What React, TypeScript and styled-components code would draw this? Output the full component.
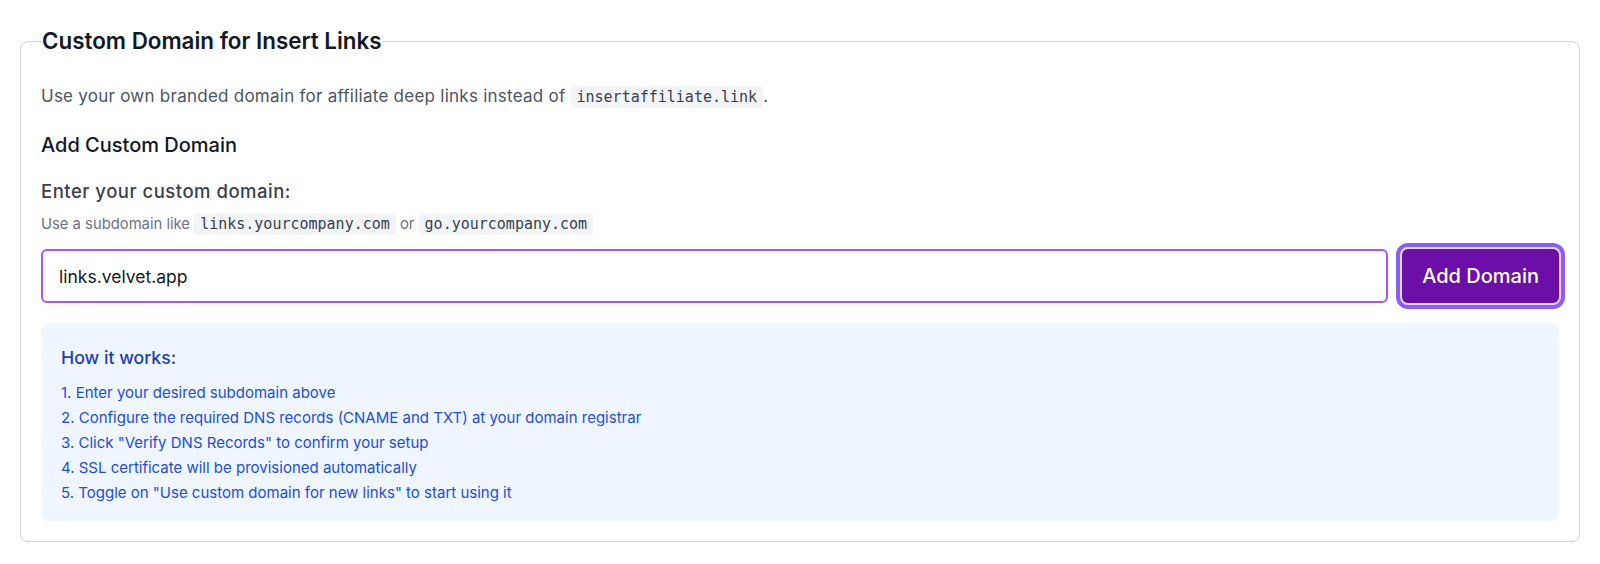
import React from 'react';
import styled, { createGlobalStyle } from 'styled-components';

const GlobalStyle = createGlobalStyle`
  html, body {
    margin: 0;
    padding: 0;
    background: #fff;
  }
  body {
    font-family: Inter, "Noto Sans", sans-serif;
    color: #111827;
    -webkit-font-smoothing: antialiased;
  }
`;

const Page = styled.div`
  padding: 27px 20px 20px;
`;

const Fieldset = styled.fieldset`
  margin: 0;
  min-width: 0;
  border: 1px solid #d1d5db;
  border-radius: 8px;
  padding: 0 20px 20px;
`;

const Legend = styled.legend`
  padding: 0 1px;
  font-size: 22.4px;
  line-height: 28px;
  font-weight: 600;
  color: #111827;
`;

const Intro = styled.p`
  margin: 29px 0 0;
  font-size: 17px;
  letter-spacing: 0.25px;
  line-height: 24px;
  color: #4b5563;
`;

const Code = styled.code`
  font-family: "DejaVu Sans Mono", monospace;
  font-size: 15px;
  letter-spacing: 0;
  line-height: 18px;
  background: #f3f4f6;
  color: #374151;
  border-radius: 4px;
  padding: 2px 6px;
`;

const SectionTitle = styled.h3`
  margin: 23px 0 0;
  font-size: 20px;
  line-height: 28px;
  font-weight: 500;
  color: #111827;
`;

const Label = styled.label`
  display: block;
  margin-top: 20px;
  font-size: 18.5px;
  letter-spacing: 0.5px;
  line-height: 24px;
  font-weight: 500;
  color: #374151;
`;

const Hint = styled.p`
  margin: 11px 0 0;
  font-size: 14.8px;
  line-height: 21px;
  color: #6b7280;
`;

const Row = styled.div`
  display: flex;
  gap: 14px;
  margin-top: 14px;
`;

const Input = styled.input`
  flex: 1;
  min-width: 0;
  height: 54px;
  box-sizing: border-box;
  border: 2px solid #a855f7;
  border-radius: 6px;
  padding: 0 16px;
  font-family: Inter, sans-serif;
  font-size: 17.5px;
  color: #111827;
  outline: none;
  background: #fff;
`;

const Button = styled.button`
  height: 54px;
  padding: 0 20px;
  border: none;
  border-radius: 6px;
  background: #6b0fa8;
  color: #fff;
  font-family: Inter, sans-serif;
  font-size: 20px;
  font-weight: 500;
  box-shadow: 0 0 0 2px #e4d4fc, 0 0 0 6px #8b5cf6;
  cursor: pointer;
`;

const InfoBox = styled.div`
  margin-top: 20px;
  background: #eff6ff;
  border-radius: 8px;
  padding: 23px 20px 18px;
`;

const InfoTitle = styled.h4`
  margin: 0 0 12px;
  font-size: 17.7px;
  line-height: 24px;
  font-weight: 500;
  color: #1e40af;
`;

const Steps = styled.ol`
  margin: 0;
  padding: 0;
  list-style: none;
  display: flex;
  flex-direction: column;
  gap: 4px;
`;

const Step = styled.li`
  font-size: 15px;
  line-height: 21px;
  color: #1d4ed8;
`;

const steps = [
  'Enter your desired subdomain above',
  'Configure the required DNS records (CNAME and TXT) at your domain registrar',
  'Click "Verify DNS Records" to confirm your setup',
  'SSL certificate will be provisioned automatically',
  'Toggle on "Use custom domain for new links" to start using it',
];

const App: React.FC = () => {
  return (
    <Page>
      <GlobalStyle />
      <Fieldset>
        <Legend>Custom Domain for Insert Links</Legend>
        <Intro>
          Use your own branded domain for affiliate deep links instead of <Code>insertaffiliate.link</Code>.
        </Intro>
        <SectionTitle>Add Custom Domain</SectionTitle>
        <Label htmlFor="domain">Enter your custom domain:</Label>
        <Hint>
          Use a subdomain like <Code>links.yourcompany.com</Code> or <Code>go.yourcompany.com</Code>
        </Hint>
        <Row>
          <Input id="domain" defaultValue="links.velvet.app" />
          <Button>Add Domain</Button>
        </Row>
        <InfoBox>
          <InfoTitle>How it works:</InfoTitle>
          <Steps>
            {steps.map((s, i) => (
              <Step key={i}>{i + 1}. {s}</Step>
            ))}
          </Steps>
        </InfoBox>
      </Fieldset>
    </Page>
  );
};

export default App;
